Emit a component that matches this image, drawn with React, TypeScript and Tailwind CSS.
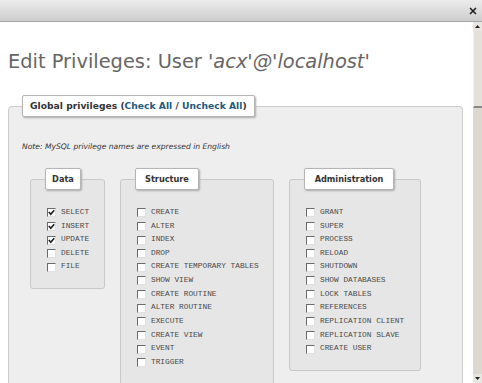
import { X } from 'lucide-react'

const data = [
  { name: 'SELECT', on: true },
  { name: 'INSERT', on: true },
  { name: 'UPDATE', on: true },
  { name: 'DELETE', on: false },
  { name: 'FILE', on: false },
]

const structure = [
  'CREATE',
  'ALTER',
  'INDEX',
  'DROP',
  'CREATE TEMPORARY TABLES',
  'SHOW VIEW',
  'CREATE ROUTINE',
  'ALTER ROUTINE',
  'EXECUTE',
  'CREATE VIEW',
  'EVENT',
  'TRIGGER',
].map((name) => ({ name, on: false }))

const admin = [
  'GRANT',
  'SUPER',
  'PROCESS',
  'RELOAD',
  'SHUTDOWN',
  'SHOW DATABASES',
  'LOCK TABLES',
  'REFERENCES',
  'REPLICATION CLIENT',
  'REPLICATION SLAVE',
  'CREATE USER',
].map((name) => ({ name, on: false }))

type Priv = { name: string; on: boolean }

function Box({ on }: { on: boolean }) {
  return (
    <span className="w-[9px] h-[9px] shrink-0 bg-white border-[1.5px] border-t-[#6a6a6a] border-l-[#6a6a6a] border-b-[#e0e0e0] border-r-[#e0e0e0] flex items-center justify-center">
      {on && (
        <svg width="7" height="7" viewBox="0 0 7 7">
          <path d="M0.8 3 L2.8 5.2 L6.2 1.2" stroke="#222" strokeWidth="1.7" fill="none" />
        </svg>
      )}
    </span>
  )
}

function Group({ title, items, w, lw }: { title: string; items: Priv[]; w: string; lw: string }) {
  return (
    <fieldset className={`${w} shrink-0 self-start border border-[#c8c8c8] rounded-[3px] bg-[#e6e6e6] pt-[16px] pb-[14px] pl-[16px]`}>
      {/* legend sits inside the padding box, so pull it back a little */}
      <legend
        className={`-ml-[2px] h-[22px] ${lw} bg-white border border-[#b5b5b5] rounded-[2px] shadow-[1px_1px_2px_#aaa] flex items-center justify-center font-['DejaVu_Sans',sans-serif] font-bold text-[8.2px] text-[#333]`}
      >
        {title}
      </legend>
      {items.map((it) => (
        <div key={it.name} className="h-[13.64px] flex items-center gap-[5px]">
          <Box on={it.on} />
          <span className="font-['Liberation_Mono',monospace] text-[7.8px] text-[#4a4a4a] whitespace-nowrap">{it.name}</span>
        </div>
      ))}
    </fieldset>
  )
}

export default function App() {
  return (
    <div className="w-[482px] h-[383px] bg-white flex flex-col overflow-hidden">
      {/* dialog title bar */}
      <div className="h-[22px] shrink-0 bg-gradient-to-b from-[#ececec] to-[#cdcdcd] border-b border-[#a8a8a8] flex items-center justify-end pr-[4px]">
        <X size={10} strokeWidth={4} className="text-[#222]" />
      </div>

      <div className="flex-1 flex min-h-0">
        <div className="flex-1 overflow-hidden pt-[28px] pl-[8px]">
          <h1 className="h-[24px] leading-[24px] text-[19.4px] text-[#666] font-['DejaVu_Sans',sans-serif] whitespace-nowrap">
            Edit Privileges: User <i>'acx'@'localhost'</i>
          </h1>

          <fieldset className="mt-[21px] w-[455px] border border-[#cccccc] rounded-[4px] bg-[#eeeeee] pt-[25px] pl-[13px] pb-[20px]">
            <legend className="h-[22px] px-[7px] bg-white border border-[#b5b5b5] rounded-[2px] shadow-[1px_1px_2px_#aaa] flex items-center font-['DejaVu_Sans',sans-serif] font-bold text-[9.2px] text-[#333]">
              Global privileges (<a className="text-[#235a81]">Check All</a>&nbsp;/&nbsp;<a className="text-[#235a81]">Uncheck All</a>)
            </legend>
            <p className="h-[10px] leading-[10px] italic text-[7.6px] text-[#333] font-['DejaVu_Sans',sans-serif]">
              Note: MySQL privilege names are expressed in English
            </p>
            <div className="mt-[16px] ml-[8px] flex gap-[15px]">
              <Group title="Data" items={data} w="w-[75px]" lw="w-[36px]" />
              <Group title="Structure" items={structure} w="w-[154px]" lw="w-[64px]" />
              <Group title="Administration" items={admin} w="w-[132px]" lw="w-[90px]" />
            </div>
          </fieldset>
        </div>

        {/* scrollbar */}
        <div className="w-[9px] shrink-0 bg-[#dcd8d0] flex flex-col">
          <div className="h-[9px] bg-[#e8e6e1] flex items-center justify-center">
            <svg width="5" height="3" viewBox="0 0 5 3">
              <path d="M0 3 L2.5 0 L5 3 Z" fill="#222" />
            </svg>
          </div>
          <div className="h-[77px] bg-[#e4e1db] border-b-2 border-[#888] border-l border-l-[#f4f2ee]" />
          <div className="flex-1" />
          <div className="h-[9px] bg-[#e8e6e1] flex items-center justify-center">
            <svg width="5" height="3" viewBox="0 0 5 3">
              <path d="M0 0 L2.5 3 L5 0 Z" fill="#222" />
            </svg>
          </div>
        </div>
      </div>
    </div>
  )
}
